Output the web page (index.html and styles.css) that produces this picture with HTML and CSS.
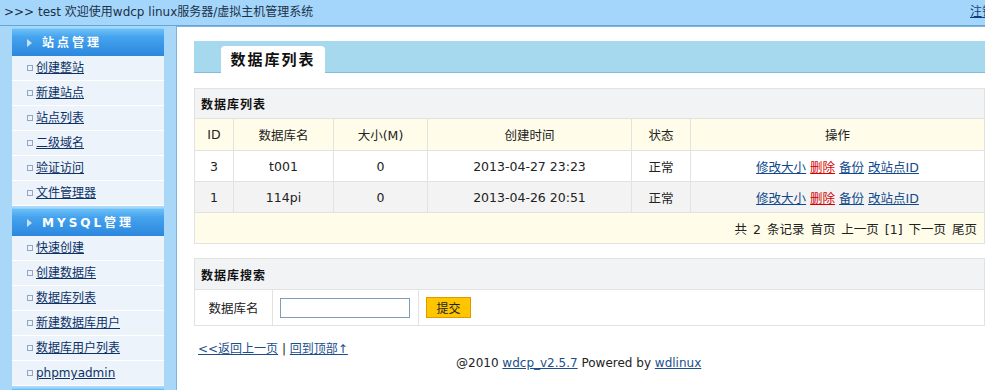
FILE: index.html
```html
<!DOCTYPE html>
<html lang="zh-CN">
<head>
    <meta charset="UTF-8">
    <title>wdcp 数据库列表</title>
    <link rel="stylesheet" href="styles.css">
</head>
<body>
<div class="page">
    <div class="topbar">
        <span>&gt;&gt;&gt; test 欢迎使用wdcp linux服务器/虚拟主机管理系统</span>
        <a href="#">注销</a>
    </div>

    <div class="layout">
        <div class="sidebar">
            <div class="menu-group">
                <div class="menu-title"><span class="arrow"></span>站点管理</div>
                <ul class="menu-list">
                    <li><a href="#">创建整站</a></li>
                    <li><a href="#">新建站点</a></li>
                    <li><a href="#">站点列表</a></li>
                    <li><a href="#">二级域名</a></li>
                    <li><a href="#">验证访问</a></li>
                    <li><a href="#">文件管理器</a></li>
                </ul>
            </div>
            <div class="menu-group">
                <div class="menu-title"><span class="arrow"></span>MYSQL管理</div>
                <ul class="menu-list">
                    <li><a href="#">快速创建</a></li>
                    <li><a href="#">创建数据库</a></li>
                    <li><a href="#">数据库列表</a></li>
                    <li><a href="#">新建数据库用户</a></li>
                    <li><a href="#">数据库用户列表</a></li>
                    <li><a href="#">phpmyadmin</a></li>
                </ul>
            </div>
            <div class="menu-group">
                <div class="menu-title"></div>
            </div>
        </div>

        <div class="main">
            <div class="tabs">
                <div class="tab">数据库列表</div>
            </div>

            <table class="grid">
                <colgroup>
                    <col style="width:39px">
                    <col style="width:100px">
                    <col style="width:94px">
                    <col style="width:204px">
                    <col style="width:59px">
                    <col>
                </colgroup>
                <tr class="caption"><td colspan="6">数据库列表</td></tr>
                <tr class="head">
                    <td>ID</td>
                    <td>数据库名</td>
                    <td>大小(M)</td>
                    <td>创建时间</td>
                    <td>状态</td>
                    <td>操作</td>
                </tr>
                <tr class="row">
                    <td>3</td>
                    <td>t001</td>
                    <td>0</td>
                    <td>2013-04-27 23:23</td>
                    <td>正常</td>
                    <td><a href="#">修改大小</a> <a href="#" class="del">删除</a> <a href="#">备份</a> <a href="#">改站点ID</a></td>
                </tr>
                <tr class="row alt">
                    <td>1</td>
                    <td>114pi</td>
                    <td>0</td>
                    <td>2013-04-26 20:51</td>
                    <td>正常</td>
                    <td><a href="#">修改大小</a> <a href="#" class="del">删除</a> <a href="#">备份</a> <a href="#">改站点ID</a></td>
                </tr>
                <tr class="pager"><td colspan="6">共 2 条记录 首页 上一页 [1] 下一页 尾页</td></tr>
            </table>

            <table class="grid search">
                <colgroup>
                    <col style="width:78px">
                    <col style="width:146px">
                    <col>
                </colgroup>
                <tr class="caption"><td colspan="3">数据库搜索</td></tr>
                <tr class="form-row">
                    <td>数据库名</td>
                    <td><input type="text" class="field"></td>
                    <td><button type="button" class="submit">提交</button></td>
                </tr>
            </table>

            <div class="back"><a href="#">&lt;&lt;返回上一页</a> | <a href="#">回到顶部↑</a></div>
            <div class="copyright">@2010 <a href="#">wdcp_v2.5.7</a> Powered by <a href="#">wdlinux</a></div>
        </div>
    </div>
</div>
</body>
</html>
```

FILE: styles.css
```css
body {
    margin: 0;
    font-family: "DejaVu Sans", "Noto Sans CJK SC", sans-serif;
    font-size: 12px;
    color: #222;
    background: #a8d7f7;
    overflow: hidden;
}
a { color: #0e3f80; }

.page { width: 1005px; }

.topbar {
    height: 25px;
    line-height: 25px;
    background: #a4d6fb;
    border-bottom: 1px solid #64a6d6;
    display: flex;
    justify-content: space-between;
    padding: 0 11px 0 4px;
    color: #1b3147;
}

.layout {
    display: flex;
    align-items: flex-start;
    gap: 12px;
    padding-left: 12px;
}

/* left menu */
.sidebar { width: 152px; margin-top: 2px; }
.menu-group + .menu-group { margin-top: 2px; }
.menu-title {
    height: 28px;
    line-height: 28px;
    background: linear-gradient(#6cc0f8, #45a3ee 30%, #2b87de);
    border-top: 1px solid #8cd0fa;
    box-sizing: border-box;
    color: #fff;
    font-weight: bold;
    font-size: 12px;
    letter-spacing: 3px;
    padding-left: 15px;
}
.arrow {
    display: inline-block;
    width: 0;
    height: 0;
    border-left: 5px solid #c6e2fa;
    border-top: 4px solid transparent;
    border-bottom: 4px solid transparent;
    margin-right: 10px;
    vertical-align: 0;
}
.menu-list { list-style: none; margin: 0; padding: 0; }
.menu-list li {
    height: 24px;
    line-height: 24px;
    background: #edf3fb;
    border-bottom: 1px solid #fff;
    padding-left: 15px;
}
.menu-list li::before {
    content: "";
    display: inline-block;
    width: 4px;
    height: 4px;
    border: 1px solid #90a8c6;
    margin-right: 3px;
    vertical-align: 1px;
}
.menu-list a { color: #0c3266; }

/* content */
.main {
    width: 791px;
    min-height: 380px;
    background: #fff;
    border: 1px solid #7db5df;
    border-bottom: none;
    padding: 14px 17px;
}
.tabs {
    height: 31px;
    background: #a6d8ee;
    border-bottom: 1px solid #80bcdc;
    padding-left: 27px;
    display: flex;
    align-items: flex-end;
}
.tab {
    width: 104px;
    height: 27px;
    line-height: 28px;
    margin-bottom: -1px;
    background: #fff;
    border-radius: 4px 4px 0 0;
    text-align: center;
    font-size: 15px;
    font-weight: bold;
    letter-spacing: 2px;
    color: #111;
}

.grid {
    width: 791px;
    margin-top: 15px;
    border-collapse: collapse;
    table-layout: fixed;
    font-size: 12.5px;
}
.grid td {
    border: 1px solid #e2e2e2;
    padding: 0 6px;
    text-align: center;
    color: #222;
}
.grid .caption td {
    height: 29px;
    background: #f2f3f5;
    text-align: left;
    font-size: 12px;
    font-weight: bold;
    letter-spacing: 1px;
    color: #111;
}
.grid .head td { height: 31px; background: #fffde9; }
.grid .row td { height: 30px; background: #fff; }
.grid .row.alt td { background: #f3f3f3; }
.grid .pager td { height: 30px; background: #fffde9; text-align: right; padding-right: 7px; word-spacing: 2px; }
.grid a { color: #104a8c; }
.grid a.del { color: #d40000; }

.search { margin-top: 14px; }
.search .caption td { height: 30px; }
.search .form-row td { height: 35px; }
.search .form-row td:last-child { text-align: left; padding-left: 7px; }
.field {
    display: block;
    width: 130px;
    height: 20px;
    box-sizing: border-box;
    border: 1px solid #7f9db9;
    margin: 0 0 0 1px;
}
.submit {
    width: 45px;
    height: 21px;
    padding: 0;
    background: #ffc600;
    border: 1px solid #e09a00;
    font-family: inherit;
    font-size: 12px;
    color: #222;
}

.back {
    margin-top: 16px;
    padding-left: 4px;
    line-height: 14px;
    color: #222;
}
.copyright {
    padding-left: 262px;
    line-height: 14px;
    color: #222;
}
.back a, .copyright a { color: #1a4f8c; }
```
